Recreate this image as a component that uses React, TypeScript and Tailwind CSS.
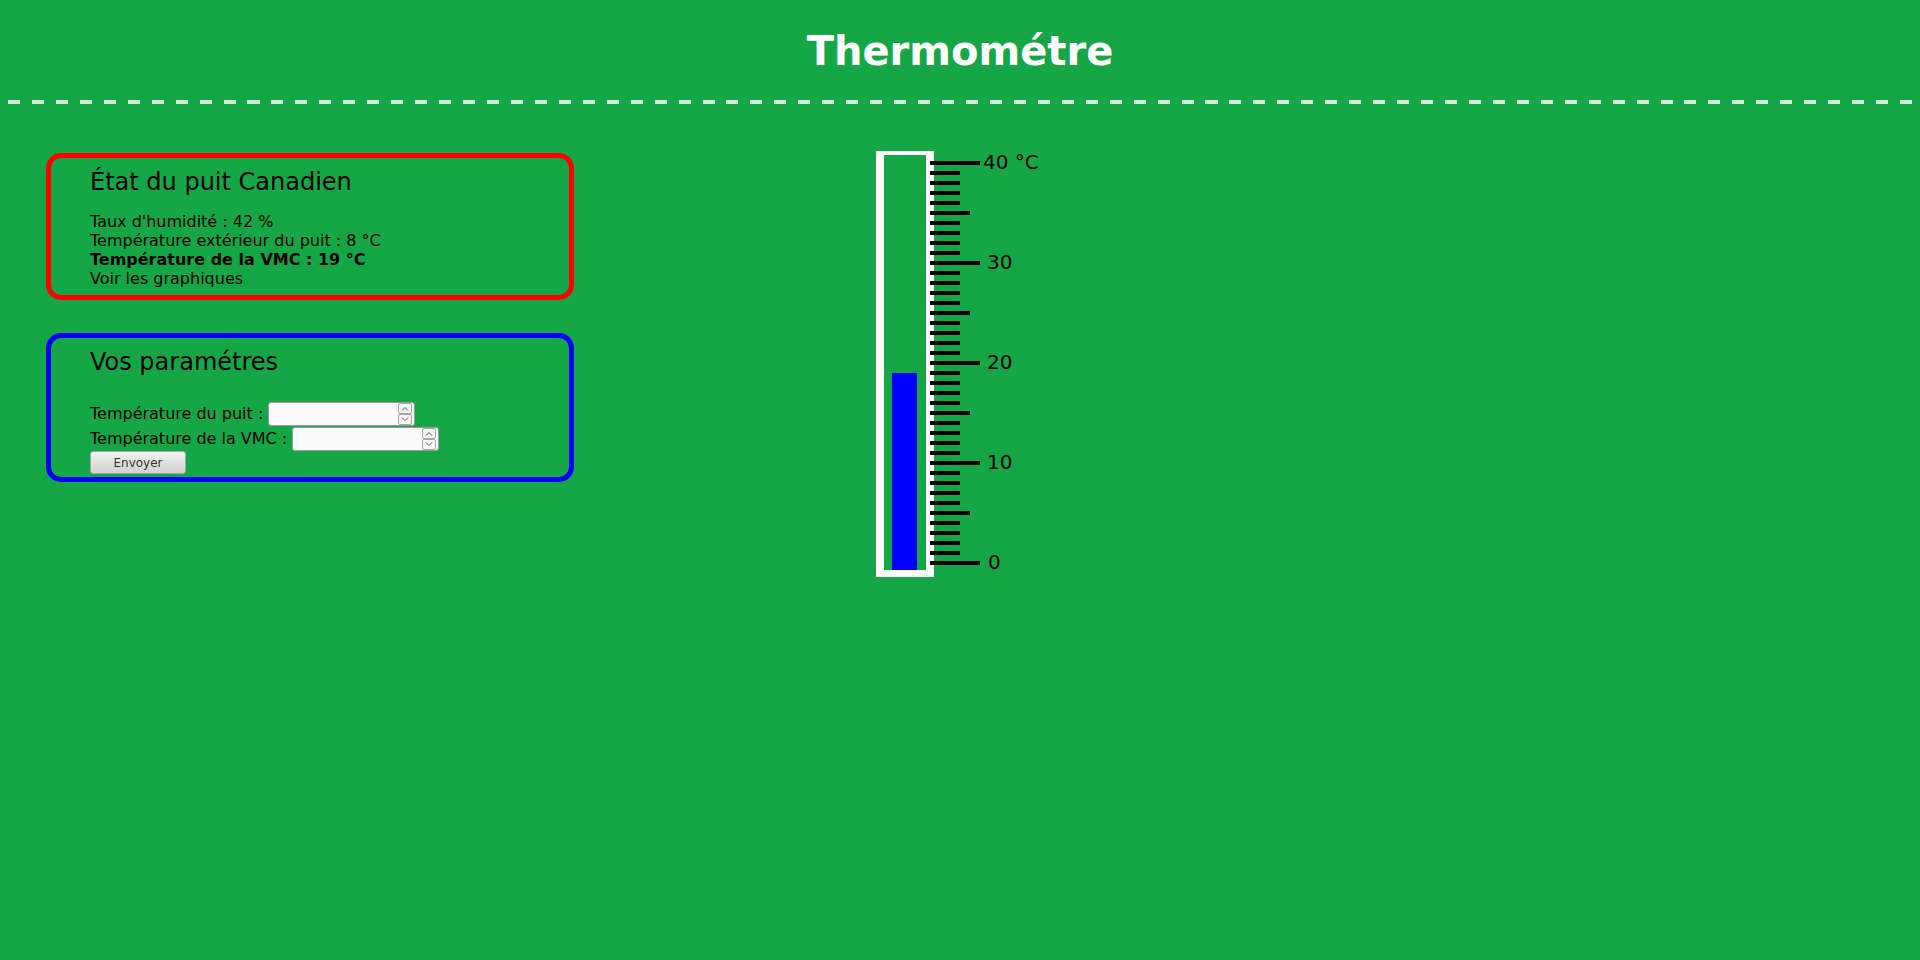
import React from 'react';

const TICKS = Array.from({ length: 41 }, (_, i) => i);

const LABELS = [
  { v: 40, text: '40 °C', x: 113 },
  { v: 30, text: '30', x: 117 },
  { v: 20, text: '20', x: 117 },
  { v: 10, text: '10', x: 117 },
  { v: 0, text: '0', x: 118 },
];

// y of a value on the scale, in svg coordinates
const yOf = (v: number) => 414 - v * 10;

function Thermometer({ value }: { value: number }) {
  const top = yOf(value);
  return (
    <svg width="190" height="440" viewBox="0 0 190 440" className="block">
      <rect x="6" y="2" width="58" height="426" fill="#ffffff" />
      <rect x="14" y="6" width="42" height="415" fill="#15a746" />
      <rect x="22" y={top} width="25" height={421 - top} fill="#0000ff" />
      {TICKS.map((v) => {
        const len = v % 10 === 0 ? 50 : v % 5 === 0 ? 40 : 30;
        return <rect key={v} x="60" y={yOf(v) - 2} width={len} height="4" fill="#000000" />;
      })}
      {LABELS.map((l) => (
        <text key={l.v} x={l.x} y={yOf(l.v) + 5.5} fontSize="20" fill="#000000">
          {l.text}
        </text>
      ))}
    </svg>
  );
}

function Chevron({ up }: { up?: boolean }) {
  return (
    <svg width="8" height="5" viewBox="0 0 8 5">
      <path
        d={up ? 'M1 4.5 L4 1.5 L7 4.5' : 'M1 0.5 L4 3.5 L7 0.5'}
        fill="none"
        stroke="#555"
        strokeWidth="1"
      />
    </svg>
  );
}

function NumberField() {
  return (
    <div className="flex h-[24px] w-[147px] items-stretch rounded-[3px] border border-[#9c9c9c] bg-[#fbfbfb] pr-[2px]">
      <input type="text" className="min-w-0 flex-1 bg-transparent px-1 text-[13px] outline-none" />
      <div className="flex w-[14px] flex-col">
        <div className="flex flex-1 items-center justify-center rounded-[2px] border border-[#a6a6a6] bg-[#f6f6f6]">
          <Chevron up />
        </div>
        <div className="flex flex-1 items-center justify-center rounded-[2px] border border-[#a6a6a6] bg-[#f6f6f6]">
          <Chevron />
        </div>
      </div>
    </div>
  );
}

export default function App() {
  return (
    <div className="min-h-screen bg-[#15a746] p-2 font-['DejaVu_Sans',sans-serif] text-[16px] text-black">
      <h1 className="mt-[20px] text-center text-[40px] font-bold leading-[normal] text-white">Thermométre</h1>
      <div className="mt-[26px] h-[4px] bg-[repeating-linear-gradient(90deg,rgba(255,255,255,0.8)_0_12px,transparent_12px_23.95px)]" />

      <div className="mt-[46px] flex items-start">
        <div className="ml-[38px] mt-[3px] flex w-[528px] flex-col gap-[33px]">
          <div className="rounded-[15px] border-[5px] border-[#ff0000] pb-[7px] pl-[39px] pt-[10px]">
            <h2 className="text-[24px] leading-[28px]">État du puit Canadien</h2>
            <div className="mt-4 leading-[19px]">
              <p>Taux d'humidité : 42 %</p>
              <p>Température extérieur du puit : 8 °C</p>
              <p className="font-bold">Température de la VMC : 19 °C</p>
              <p>Voir les graphiques</p>
            </div>
          </div>

          <div className="rounded-[15px] border-[5px] border-[#0000ff] pb-[3px] pl-[39px] pt-[10px]">
            <h2 className="text-[24px] leading-[28px]">Vos paramétres</h2>
            <div className="mt-[25px] flex h-[25px] items-center gap-[5px]">
              <span>Température du puit :</span>
              <NumberField />
            </div>
            <div className="flex h-[25px] items-center gap-[5px]">
              <span>Température de la VMC :</span>
              <NumberField />
            </div>
            <button className="flex h-[23px] w-[96px] items-center justify-center rounded-[3px] border border-[#a8a8a8] bg-gradient-to-b from-[#f2f2f2] to-[#d2d2d2] text-[12px] text-[#333]">
              Envoyer
            </button>
          </div>
        </div>

        <div className="ml-[296px] -mt-[1px]">
          <Thermometer value={19} />
        </div>
      </div>
    </div>
  );
}
